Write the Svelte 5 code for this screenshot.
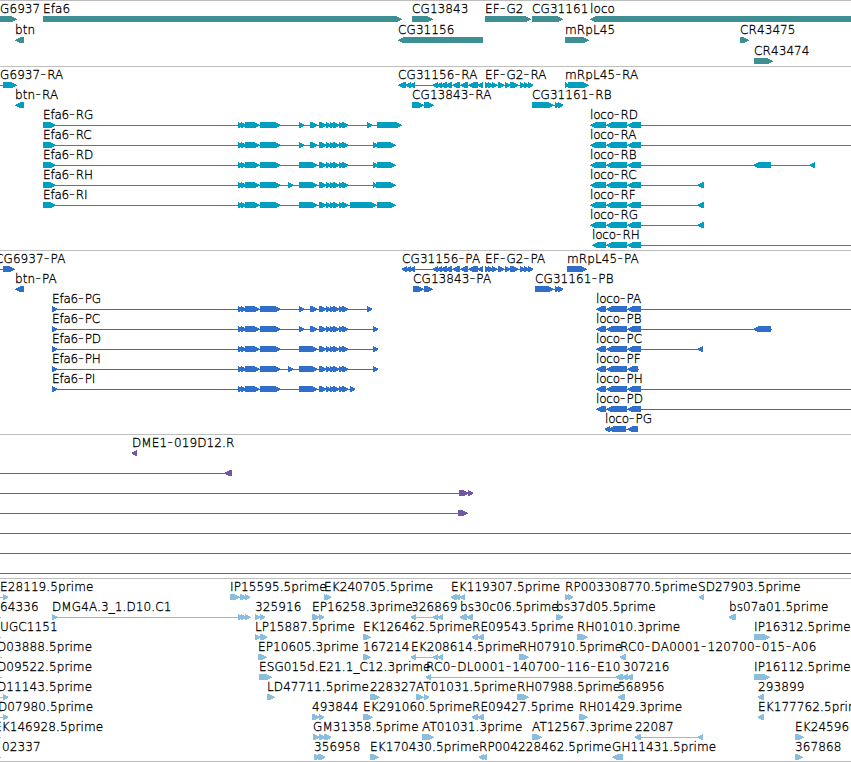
<script lang="ts">
  type Part = [number, number];

  interface Feature {
    row: number;
    x: number;
    label?: string;
    dir?: 'l' | 'r';
    line?: Part;
    parts?: Part[];
  }

  interface Track {
    name: string;
    height: number;
    pitch: number;
    features: Feature[];
  }

  const WIDTH = 851;
  const BAR_TOP = 15;

  // how far each pixel row of an arrow stops short of the tip
  const TIP = [5, 3, 1, 0, 2, 4];
  const SHORT_TIP = [4, 2, 0, 0, 1, 3];

  // exons shared between isoforms
  const efaStart: Part[] = [[238, 243], [241, 246], [245, 260], [260, 281]];
  const efaMid: Part[] = [[319, 326], [326, 331], [330, 335], [333, 339], [339, 344], [342, 348]];
  const efaSmall: Part[] = [...efaStart, [299, 304], [310, 318], ...efaMid];
  const efaLarge: Part[] = [...efaStart, [299, 318], ...efaMid];
  const cgTail: Part[] = [[433, 438], [437, 442], [441, 447], [446, 452], [453, 460], [460, 468], [468, 478], [478, 483]];
  const efg: Part[] = [[485, 490], [488, 493], [492, 497], [498, 504], [505, 510], [510, 519], [520, 525], [524, 529], [528, 533]];

  function f(row: number, x: number, label: string, dir: 'l' | 'r', parts: Part[], line?: Part): Feature {
    return { row, x, label, dir, parts, line };
  }

  function loco(row: number, name: string, x: number, end: number, extra: Part[] = [], last = 641): Feature {
    return f(row, x, name, 'l', [[x, 606], [606, 627], [627, last], ...extra], [x, end]);
  }

  const genes: Feature[] = [
    f(0, 0, 'G6937', 'r', [[-8, 17]]),
    f(0, 43, 'Efa6', 'r', [[43, 402]]),
    f(0, 412, 'CG13843', 'r', [[412, 433]]),
    f(0, 485, 'EF-G2', 'r', [[485, 531]]),
    f(0, 532, 'CG31161', 'r', [[532, 563]]),
    f(0, 590, 'loco', 'l', [[590, 870]]),
    f(1, 15, 'btn', 'l', [[15, 24]]),
    f(1, 398, 'CG31156', 'l', [[398, 483]]),
    f(1, 565, 'mRpL45', 'r', [[565, 589]]),
    f(1, 740, 'CR43475', 'r', [[740, 749]]),
    f(2, 754, 'CR43474', 'r', [[754, 773]])
  ];

  const transcripts: Feature[] = [
    f(0, 0, 'G6937-RA', 'r', [[3, 17]], [0, 4]),
    f(0, 398, 'CG31156-RA', 'l', [[398, 406], [406, 411], [410, 415], ...cgTail], [400, 483]),
    f(0, 485, 'EF-G2-RA', 'r', efg, [485, 533]),
    f(0, 565, 'mRpL45-RA', 'r', [[565, 569], [568, 589]]),
    f(1, 15, 'btn-RA', 'l', [[15, 24]]),
    f(1, 412, 'CG13843-RA', 'r', [[412, 424], [424, 434]], [412, 434]),
    f(1, 532, 'CG31161-RB', 'r', [[532, 554], [555, 560], [558, 563]], [532, 563]),
    f(2, 43, 'Efa6-RG', 'r', [[43, 56], ...efaSmall, [367, 372], [377, 402]], [43, 402]),
    f(3, 43, 'Efa6-RC', 'r', [[43, 56], ...efaSmall, [373, 378], [377, 396]], [43, 396]),
    f(4, 43, 'Efa6-RD', 'r', [[43, 56], ...efaLarge, [373, 378], [377, 396]], [43, 396]),
    f(5, 43, 'Efa6-RH', 'r', [[43, 56], [288, 293], ...efaLarge, [373, 377], [376, 396]], [43, 396]),
    f(6, 43, 'Efa6-RI', 'r', [[43, 56], ...efaLarge, [350, 377], [377, 396]], [43, 396]),
    loco(2, 'loco-RD', 590, WIDTH),
    loco(3, 'loco-RA', 590, WIDTH),
    loco(4, 'loco-RB', 590, 815, [[753, 771], [810, 815]]),
    loco(5, 'loco-RC', 590, 704, [[698, 704]]),
    loco(6, 'loco-RF', 590, 704, [[698, 704]]),
    loco(7, 'loco-RG', 590, 704, [[698, 704]]),
    loco(8, 'loco-RH', 592, WIDTH)
  ];

  const proteins: Feature[] = [
    f(0, -5, 'CG6937-PA', 'r', [[3, 15]], [0, 4]),
    f(0, 402, 'CG31156-PA', 'l', [[402, 407], [406, 411], [410, 415], ...cgTail], [402, 483]),
    f(0, 485, 'EF-G2-PA', 'r', efg, [485, 533]),
    f(0, 567, 'mRpL45-PA', 'r', [[567, 587]]),
    f(1, 15, 'btn-PA', 'l', [[15, 24]]),
    f(1, 413, 'CG13843-PA', 'r', [[413, 424], [424, 433]], [413, 433]),
    f(1, 535, 'CG31161-PB', 'r', [[535, 554], [555, 560], [558, 563]], [535, 563]),
    f(2, 52, 'Efa6-PG', 'r', [[52, 57], ...efaSmall, [367, 372]], [52, 372]),
    f(3, 52, 'Efa6-PC', 'r', [[52, 57], ...efaSmall, [373, 378]], [52, 378]),
    f(4, 52, 'Efa6-PD', 'r', [[52, 57], ...efaLarge, [373, 378]], [52, 378]),
    f(5, 52, 'Efa6-PH', 'r', [[52, 57], [288, 293], ...efaLarge, [373, 378]], [52, 378]),
    f(6, 52, 'Efa6-PI', 'r', [[52, 57], ...efaLarge, [350, 355]], [52, 355]),
    loco(2, 'loco-PA', 596, WIDTH),
    loco(3, 'loco-PB', 596, 772, [[753, 771]]),
    loco(4, 'loco-PC', 596, 703, [[698, 703]]),
    loco(5, 'loco-PF', 596, 639, [], 638),
    loco(6, 'loco-PH', 596, WIDTH),
    loco(7, 'loco-PD', 596, WIDTH),
    f(8, 605, 'loco-PG', 'l', [[605, 610], [608, 626], [627, 638]], [605, 638])
  ];

  const bacs: Feature[] = [
    f(0, 132, 'DME1-019D12.R', 'l', [[132, 137]]),
    { row: 1, x: 0, dir: 'l', line: [0, 230], parts: [[225, 232]] },
    { row: 2, x: 0, dir: 'r', line: [0, 470], parts: [[459, 469], [468, 473]] },
    { row: 3, x: 0, dir: 'r', line: [0, 466], parts: [[458, 468]] },
    { row: 4, x: 0, line: [0, WIDTH] },
    { row: 5, x: 0, line: [0, WIDTH] },
    { row: 6, x: 0, line: [0, WIDTH] }
  ];

  const cdnas: Feature[] = [
    f(0, 0, 'E28119.5prime', 'r', [[3, 8]], [0, 4]),
    f(0, 230, 'IP15595.5prime', 'r', [[230, 240], [240, 246], [245, 250]], [230, 250]),
    f(0, 324, 'EK240705.5prime', 'r', [[324, 329], [326, 331]]),
    f(0, 451, 'EK119307.5prime', 'l', [[451, 457], [455, 460], [460, 465]], [451, 465]),
    f(0, 565, 'RP003308770.5prime', 'r', [[565, 570], [568, 573]]),
    f(0, 698, 'SD27903.5prime', 'l', [[699, 704]]),
    f(1, 0, '64336', 'r', [], [0, 1]),
    f(1, 52, 'DMG4A.3_1.D10.C1', 'r', [[52, 57], [238, 243], [241, 246], [245, 250]], [52, 251]),
    f(1, 255, '325916', 'r', [[255, 260], [260, 265]]),
    f(1, 312, 'EP16258.3prime', 'r', [[312, 319], [319, 324]]),
    f(1, 411, '326869', 'l', [[411, 416], [433, 438], [438, 443]], [411, 443]),
    f(1, 460, 'bs30c06.5prime', 'l', [[460, 467], [467, 473]]),
    f(1, 556, 'bs37d05.5prime', 'r', [[556, 561], [558, 563]]),
    f(1, 729, 'bs07a01.5prime', 'l', [[729, 736]]),
    f(2, 0, 'UGC1151', 'r', [], [0, 1]),
    f(2, 255, 'LP15887.5prime', 'r', [[255, 260], [260, 267]]),
    f(2, 363, 'EK126462.5prime', 'r', [[363, 371]]),
    f(2, 472, 'RE09543.5prime', 'l', [[472, 478], [478, 484]]),
    f(2, 577, 'RH01010.3prime', 'r', [[577, 588]]),
    f(2, 754, 'IP16312.5prime', 'r', [[754, 770]]),
    f(3, -3, 'D03888.5prime', 'r', [], [0, 2]),
    f(3, 258, 'EP10605.3prime', 'r', [[258, 267]]),
    f(3, 363, '167214', 'r', [[363, 371]]),
    f(3, 411, 'EK208614.5prime', 'l', [[411, 416], [433, 438], [438, 443]], [411, 443]),
    f(3, 519, 'RH07910.5prime', 'r', [[519, 529]]),
    f(3, 620, 'RC0-DA0001-120700-015-A06', 'l', [[620, 626]]),
    f(4, -3, 'D09522.5prime', 'r', [], [0, 2]),
    f(4, 259, 'ESG015d.E21.1_C12.3prime', 'r', [[259, 272]]),
    f(4, 426, 'RC0-DL0001-140700-116-E10', 'l', [[426, 431], [616, 623], [622, 628], [627, 633]], [426, 633]),
    f(4, 623, '307216', 'l', []),
    f(4, 754, 'IP16112.5prime', 'r', [[754, 770]]),
    f(5, -3, 'D11143.5prime', 'r', [[3, 8]], [0, 4]),
    f(5, 267, 'LD47711.5prime', 'r', [[267, 275]]),
    f(5, 370, '228327', 'r', [[370, 380]]),
    f(5, 416, 'AT01031.5prime', 'r', [[416, 424], [424, 429]]),
    f(5, 517, 'RH07988.5prime', 'r', [[517, 529]]),
    f(5, 618, '568956', 'l', [[618, 625]]),
    f(5, 758, '293899', 'l', [[758, 764]]),
    f(6, -2, 'D07980.5prime', 'r', [[3, 8]], [0, 4]),
    f(6, 312, '493844', 'r', [[312, 319], [319, 324]]),
    f(6, 363, 'EK291060.5prime', 'r', [[363, 373]]),
    f(6, 472, 'RE09427.5prime', 'l', [[472, 478], [478, 484]]),
    f(6, 579, 'RH01429.3prime', 'r', [[579, 588]]),
    f(6, 758, 'EK177762.5prime', 'l', [[758, 764]]),
    f(7, -6, 'EK146928.5prime', 'r', [], [0, 1]),
    f(7, 313, 'GM31358.5prime', 'r', [[313, 319], [319, 325], [324, 331]]),
    f(7, 422, 'AT01031.3prime', 'r', [[422, 434]]),
    f(7, 532, 'AT12567.3prime', 'r', [[532, 542]]),
    f(7, 635, '22087', 'l', [[635, 641], [698, 703]], [635, 703]),
    f(7, 795, 'EK24596', 'r', [[795, 804]]),
    f(8, 2, '02337', 'r', [], [0, 1]),
    f(8, 314, '356958', 'r', [[314, 320], [318, 325]]),
    f(8, 370, 'EK170430.5prime', 'r', [[370, 379]]),
    f(8, 479, 'RP004228462.5prime', 'l', [[479, 484], [482, 487]]),
    f(8, 612, 'GH11431.5prime', 'l', [[612, 623]]),
    f(8, 795, '367868', 'r', [[795, 803]])
  ];

  const tracks: Track[] = [
    { name: 'gene', height: 65, pitch: 21, features: genes },
    { name: 'transcript', height: 183, pitch: 20, features: transcripts },
    { name: 'protein', height: 183, pitch: 20, features: proteins },
    { name: 'bac', height: 143, pitch: 20, features: bacs },
    { name: 'cdna', height: 182, pitch: 20, features: cdnas }
  ];

  // box with a stepped point in the direction of the strand
  function arrow([a, b]: Part, y: number, dir = 'r') {
    const base = dir === 'l' ? b : a;
    const tip = b - a < 8 ? SHORT_TIP : TIP;
    let d = `M${base} ${y}`;
    tip.forEach((inset, i) => {
      const cut = Math.min(inset, b - a - 1);
      d += `H${dir === 'l' ? a + cut : b - cut}V${y + i + 1}`;
    });
    return `${d}H${base}Z`;
  }
</script>

<main class="browser">
  {#each tracks as track}
    <section class="track {track.name}">
      <svg width={WIDTH} height={track.height}>
        {#each track.features as feature}
          {@const top = BAR_TOP + feature.row * track.pitch}
          {#if feature.line}
            <rect x={feature.line[0]} y={top + 3} width={feature.line[1] - feature.line[0]} height="1" />
          {/if}
          {#each feature.parts ?? [] as part}
            <path d={arrow(part, top, feature.dir)} />
          {/each}
          {#if feature.label}
            <text
              x={feature.x}
              y={top - 3}
              class:tight={/^(loco|Efa6)-/.test(feature.label)}
              class:loose={feature.label.startsWith('RC0')}
            >{#each feature.label.split(/(-)/) as piece}<tspan class:dash={piece === '-'}>{piece}</tspan>{/each}</text>
          {/if}
        {/each}
      </svg>
    </section>
  {/each}
</main>

<style>
  :global(body) {
    background: #fff;
    overflow: hidden;
  }

  .browser {
    display: flex;
    flex-direction: column;
    width: 851px;
    border-bottom: 1px solid #bebebe;
  }

  .track {
    border-top: 1px solid #bebebe;
  }

  svg {
    display: block;
    shape-rendering: crispEdges;
  }

  text {
    fill: #000;
    stroke: #000;
    stroke-width: 0.3px;
    font-family: "DejaVu Sans", sans-serif;
    font-size: 12px;
    font-weight: 200;
    letter-spacing: 0.1px;
    white-space: pre;
  }

  .tight {
    letter-spacing: -0.2px;
  }

  .loose {
    letter-spacing: 0.27px;
  }

  .dash {
    font-size: 16px;
    letter-spacing: 1px;
    stroke-width: 0.1px;
  }

  .gene {
    fill: #3e8f93;
  }

  .transcript {
    fill: #009fbf;
  }

  .protein {
    fill: #306ecc;
  }

  .bac {
    fill: #7157a6;
  }

  .cdna {
    fill: #89bede;
  }
</style>
